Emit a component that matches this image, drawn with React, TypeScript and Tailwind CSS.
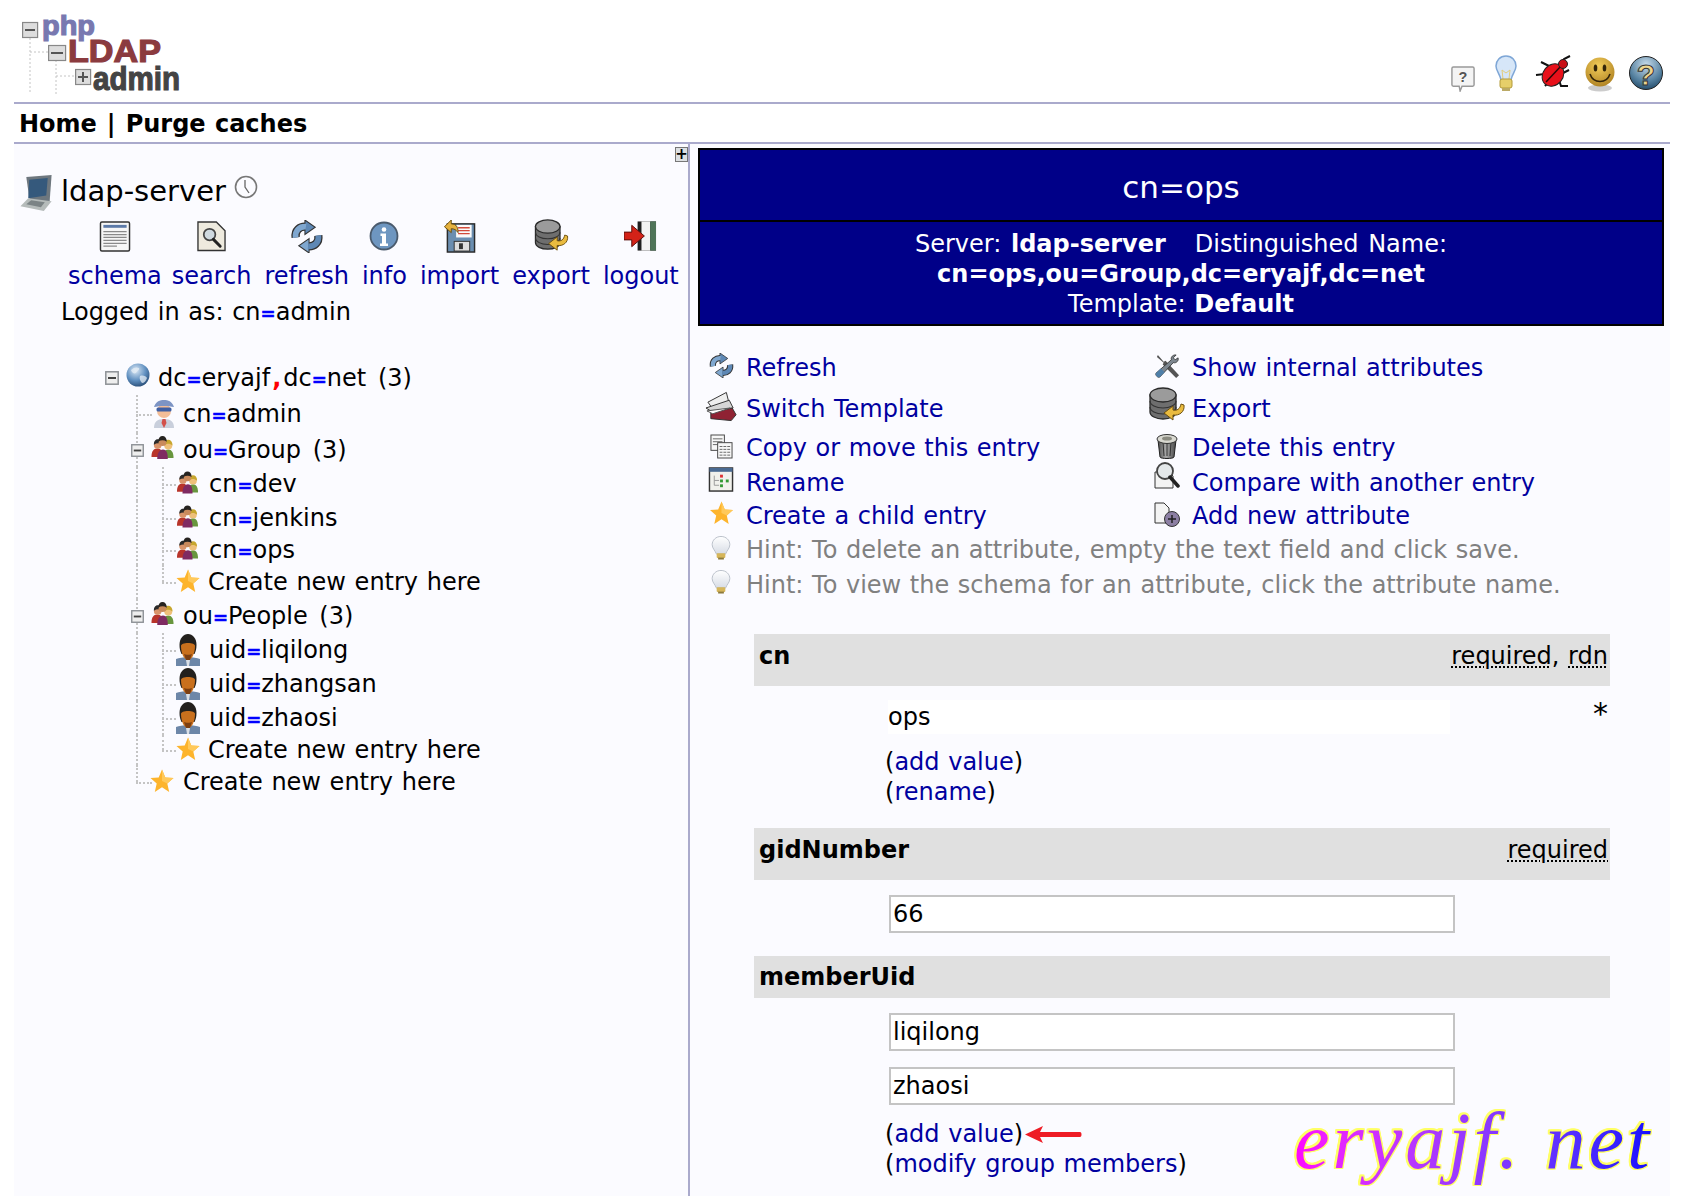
import type { ReactNode } from 'react'

const linkClass = 'text-[#0000a0]'

type IconProps = { className?: string }

function SharedDefs() {
  return (
    <svg className="absolute h-0 w-0" aria-hidden="true">
      <defs>
        <radialGradient id="globe" cx="0.4" cy="0.3" r="0.8">
          <stop offset="0" stopColor="#dbe8f5" />
          <stop offset="0.55" stopColor="#5f8fc0" />
          <stop offset="1" stopColor="#1d3f68" />
        </radialGradient>
        <radialGradient id="helpball" cx="0.5" cy="0.25" r="0.85">
          <stop offset="0" stopColor="#c7dbea" />
          <stop offset="0.6" stopColor="#54809f" />
          <stop offset="1" stopColor="#153a58" />
        </radialGradient>
        <radialGradient id="smile" cx="0.45" cy="0.3" r="0.8">
          <stop offset="0" stopColor="#f3cd5a" />
          <stop offset="1" stopColor="#a87a1c" />
        </radialGradient>
        <linearGradient id="can" x1="0" x2="1" y1="0" y2="0">
          <stop offset="0" stopColor="#4d4d4d" />
          <stop offset="0.45" stopColor="#aaaaaa" />
          <stop offset="1" stopColor="#444444" />
        </linearGradient>
        <linearGradient id="bulb" x1="0" x2="0" y1="0" y2="1">
          <stop offset="0" stopColor="#ffffff" />
          <stop offset="1" stopColor="#d8dde6" />
        </linearGradient>
      </defs>
    </svg>
  )
}

function Star({ className }: IconProps) {
  return (
    <svg viewBox="0 0 24 24" className={className}>
      <path d="M12 0.5l3.3 7.900 8.200.7-6.200 5.400 1.900 8.400L12 18.300 4.800 22.900l1.900-8.400L.5 9.100l8.200-.7z" fill="#fdb42c" />
      <path d="M12 0.500l3.300 7.900 8.200.7-6.200 5.400L12 12z" fill="#ffc95a" />
    </svg>
  )
}

function Expander({ className }: IconProps) {
  return (
    <svg viewBox="0 0 14 14" className={className}>
      <rect x="0.8" y="0.8" width="12.400" height="12.400" fill="#eeeeee" stroke="#8d9196" strokeWidth="1.500" />
      <rect x="3" y="6" width="8" height="2" fill="#444444" />
    </svg>
  )
}

function Globe({ className }: IconProps) {
  return (
    <svg viewBox="0 0 24 24" className={className}>
      <circle cx="12" cy="12" r="11.500" fill="url(#globe)" />
      <path d="M5 7c3-3 6-3 8-2 1 2-2 3-3 5-2 1-4 0-5-3zM14 13c3-1 6 0 7 2-1 3-3 5-5 5-2-2-3-5-2-7z" fill="#e6eef5" opacity="0.75" />
    </svg>
  )
}

function Admin({ className }: IconProps) {
  return (
    <svg viewBox="0 0 22 28" className={className}>
      <path d="M1 28c0-6 3-9 10-9s10 3 10 9z" fill="#c9cfdc" />
      <path d="M9.500 19h3l1 4-2.500 5-2.500-5z" fill="#d3504a" />
      <circle cx="11" cy="11" r="7" fill="#f3bd97" />
      <path d="M1 7c2-6 6-7 10-7s8 1 10 7c-6-1.500-14-1.500-20 0z" fill="#7d94c4" />
      <rect x="3.500" y="7.500" width="15" height="4" rx="1.500" fill="#3f5fa3" />
    </svg>
  )
}

function Group({ className }: IconProps) {
  return (
    <svg viewBox="0 0 23 24" className={className}>
      <path d="M0 22c0-6 2-9 6-9s6 3 6 9z" fill="#b8342a" />
      <circle cx="6.500" cy="9.500" r="4" fill="#d9946a" />
      <path d="M2.500 9c0-4 2-5.500 4-5.500s4 1.500 4 5.500c-2-2-5-2-8 0z" fill="#2b2b2b" />
      <path d="M12 23c0-6 2-9 5.500-9s5.500 3 5.500 9z" fill="#68963e" />
      <circle cx="17.500" cy="10" r="4.200" fill="#eec07a" />
      <path d="M13 10c0-4 2-6 4.500-6s4.500 2 4.500 6c-3-2.500-6-2.500-9 0z" fill="#c7a62e" />
      <path d="M6 24c0-6 2-10 6-10s5 4 5 10z" fill="#7f2b62" />
      <circle cx="11.500" cy="6.500" r="4" fill="#c98a5c" />
      <path d="M7 6c0-4 2-6 4.500-6S16 2 16 6c-3-2-6-2-9 0z" fill="#262320" />
    </svg>
  )
}

function Person({ className }: IconProps) {
  return (
    <svg viewBox="0 0 24 32" className={className}>
      <path d="M0 32v-7c3-1 7-2 12-2s9 1 12 2v7z" fill="#6d87a8" />
      <path d="M10 26h4l-1 6h-2z" fill="#d9dfe6" />
      <path d="M3.500 11C3.500 4 7.500 0 12 0s8.500 4 8.500 11c0 3-.5 6-2 9h-13C4 17 3.500 14 3.500 11z" fill="#23201d" />
      <path d="M5 12c0-2 3-3 7-3s7 1 7 3c0 7-3 14-7 14S5 19 5 12z" fill="#c9701d" />
      <path d="M8 20c1.500 1 6.500 1 8 0l-2 6h-4z" fill="#7c3f12" />
    </svg>
  )
}

function Bulb({ className }: IconProps) {
  return (
    <svg viewBox="0 0 20 25" className={className}>
      <path d="M10 .5C4.500.5.800 4.500.800 9c0 4 3.200 6 4.200 9.500h10C16 15 19.200 13 19.200 9 19.200 4.500 15.500.5 10 .5z" fill="url(#bulb)" stroke="#b9bfc9" />
      <rect x="5.500" y="18" width="9" height="5" rx="1" fill="#d6b65a" />
      <rect x="7" y="22.500" width="6" height="2" fill="#8d7a3c" />
    </svg>
  )
}

function RefreshIcon({ className }: IconProps) {
  const top = 'M5 17C4 10 9 6 15 6.500'
  const bottom = 'M27 15c1 7-4 11-10 10.500'
  return (
    <svg viewBox="0 0 32 32" className={className}>
      <path d={top} fill="none" stroke="#333333" strokeWidth="8" />
      <path d={bottom} fill="none" stroke="#333333" strokeWidth="8" />
      <path d="M14 0l10 7-10 7z" fill="#5e88b5" stroke="#333333" />
      <path d="M18 18l-10 7 10 7z" fill="#7fa7cf" stroke="#333333" />
      <path d={top} fill="none" stroke="#7fa7cf" strokeWidth="5.500" />
      <path d={bottom} fill="none" stroke="#5e88b5" strokeWidth="5.500" />
    </svg>
  )
}

function SchemaIcon({ className }: IconProps) {
  return (
    <svg viewBox="0 0 32 32" className={className}>
      <rect x="1" y="1" width="30" height="30" rx="1.500" fill="#f6f6f6" stroke="#333333" strokeWidth="1.500" />
      <rect x="4" y="4" width="24" height="3" fill="#5c7aa8" />
      <path d="M4 11h24M4 14h24M4 17h24M4 20h24M4 23h24M4 26h14" stroke="#8a8a8a" strokeWidth="1.300" />
    </svg>
  )
}

function SearchIcon({ className }: IconProps) {
  return (
    <svg viewBox="0 0 30 32" className={className}>
      <path d="M1 1h19l9 9v20.500H1z" fill="#eeeade" stroke="#333333" strokeWidth="1.400" />
      <circle cx="13" cy="14" r="6" fill="#cfd9df" stroke="#444444" strokeWidth="1.800" />
      <path d="M17 19l7 7" stroke="#222222" strokeWidth="3" strokeLinecap="round" />
    </svg>
  )
}

function InfoIcon({ className }: IconProps) {
  return (
    <svg viewBox="0 0 30 30" className={className}>
      <circle cx="15" cy="15" r="13.500" fill="#6e96c0" stroke="#4a5a6c" strokeWidth="1.800" />
      <circle cx="15" cy="8.500" r="2.300" fill="#ffffff" />
      <path d="M11.500 12.500h5.500v10h2v2.500h-8v-2.500h2v-7.500h-1.500z" fill="#ffffff" />
    </svg>
  )
}

function ImportIcon({ className }: IconProps) {
  return (
    <svg viewBox="0 0 32 34" className={className}>
      <rect x="3" y="4" width="28" height="29" fill="#6b8eb0" stroke="#2a2a2a" strokeWidth="1.500" />
      <rect x="12" y="5" width="16" height="13" fill="#fafafa" />
      <path d="M14 8h12M14 11h12M14 14h12" stroke="#d24a3a" strokeWidth="1.400" />
      <rect x="10" y="22" width="16" height="10" fill="#dddddd" stroke="#333333" />
      <rect x="15" y="24" width="4" height="6" fill="#333333" />
      <path d="M0 7l7-7v4c5 0 7 3 7 9-2-3-4-4-7-4v4z" fill="#e5b13e" stroke="#6a4e10" />
    </svg>
  )
}

function ExportIcon({ className }: IconProps) {
  return (
    <svg viewBox="0 0 36 36" className={className}>
      <path d="M1 8v17c0 4 6 7 13 7s13-3 13-7V8z" fill="#6e6e6e" stroke="#2a2a2a" strokeWidth="1.300" />
      <path d="M1 14c0 4 6 7 13 7s13-3 13-7M1 20c0 4 6 7 13 7s13-3 13-7" fill="none" stroke="#333333" strokeWidth="1.100" />
      <ellipse cx="14" cy="8" rx="13" ry="7" fill="#9b9b9b" stroke="#2a2a2a" strokeWidth="1.300" />
      <path d="M35 18c1 7-5 11-11 10v5l-9-7 9-7v4c4 1 7-1 8-6z" fill="#eabb3f" stroke="#6c5010" />
    </svg>
  )
}

function LogoutIcon({ className }: IconProps) {
  return (
    <svg viewBox="0 0 34 32" className={className}>
      <rect x="14" y="1" width="19" height="30" fill="#1f1f1f" />
      <path d="M18 1h9v30h-9z" fill="#f3f3f3" />
      <path d="M27 1h6v30h-6z" fill="#4f7458" />
      <path d="M0 12h8V5l13 11-13 11v-7H0z" fill="#d32218" stroke="#5a0f0b" />
    </svg>
  )
}

function ClockIcon({ className }: IconProps) {
  return (
    <svg viewBox="0 0 24 24" className={className}>
      <circle cx="12" cy="12" r="10.500" fill="#fbfbff" stroke="#777777" strokeWidth="1.600" />
      <path d="M11 5v7l4 6" fill="none" stroke="#666666" strokeWidth="1.300" />
    </svg>
  )
}

function ServerIcon({ className }: IconProps) {
  return (
    <svg viewBox="0 0 34 38" className={className}>
      <path d="M6 2l26-2-2 27-20 3z" fill="#6e777e" />
      <path d="M9 5l19-2-1.500 18L8 24z" fill="#35597c" />
      <path d="M0 32l8-8 24 3-8 10z" fill="#b5bbba" />
      <path d="M6 30l5-4 14 2-4 5z" fill="#7b8385" />
    </svg>
  )
}

function ToolsIcon({ className }: IconProps) {
  return (
    <svg viewBox="0 0 26 26" className={className}>
      <path d="M3 1l6 7 2-1 14 15-3 3L8 11l1-2-7-6z" fill="#555555" />
      <path d="M22 1c-3-.5-6 2-5 5L1 20c-1 2 2 5 4 4L19 9c3 1 6-2 5-5l-3 2-2-2z" fill="#7d8790" stroke="#2a2a2a" strokeWidth="0.800" />
      <path d="M1 20l5-5 4 4-5 5c-2 1-5-2-4-4z" fill="#4f7fa8" />
    </svg>
  )
}

function SwitchIcon({ className }: IconProps) {
  return (
    <svg viewBox="0 0 34 32" className={className}>
      <path d="M3 11L22 1l3 12-17 5z" fill="#eeeeee" stroke="#333333" />
      <path d="M1 17l24-8 4 8-20 5z" fill="#d6d6d6" stroke="#333333" />
      <path d="M6 22l22-5 4 7-5 6-21-2z" fill="#8f2233" stroke="#333333" />
      <path d="M2 20l24-3-18 6z" fill="#ffffff" stroke="#555555" />
    </svg>
  )
}

function CopyIcon({ className }: IconProps) {
  return (
    <svg viewBox="0 0 24 26" className={className}>
      <rect x="1" y="1" width="14" height="16" fill="#f7f7f7" stroke="#444444" />
      <path d="M3 5h10M3 8h10M3 11h10" stroke="#666666" />
      <rect x="8" y="9" width="15" height="16" fill="#f7f7f7" stroke="#444444" />
      <path d="M10 13h11M10 16h11M10 19h11M10 22h11" stroke="#666666" strokeDasharray="3 1" />
    </svg>
  )
}

function RenameIcon({ className }: IconProps) {
  return (
    <svg viewBox="0 0 26 26" className={className}>
      <rect x="1" y="1" width="24" height="24" fill="#f1f1ec" stroke="#333333" strokeWidth="1.500" />
      <rect x="1" y="1" width="24" height="4" fill="#4a6a92" />
      <path d="M6 9v10h5M6 14h5" fill="none" stroke="#999999" />
      <rect x="12" y="8" width="3" height="3" fill="#d33" />
      <rect x="12" y="13" width="3" height="3" fill="#393" />
      <rect x="18" y="13" width="3" height="3" fill="#393" />
      <rect x="12" y="18" width="3" height="3" fill="#393" />
    </svg>
  )
}

function TrashIcon({ className }: IconProps) {
  return (
    <svg viewBox="0 0 22 25" className={className}>
      <path d="M2 6l2 17c0 2 14 2 14 0l2-17z" fill="url(#can)" stroke="#222222" />
      <path d="M7 8l1 14M11 8v14M15 8l-1 14" stroke="#333333" />
      <ellipse cx="11" cy="5" rx="10" ry="4.500" fill="#d8d8d0" stroke="#333333" />
      <ellipse cx="11" cy="4.500" rx="5" ry="2" fill="#8b8b80" />
    </svg>
  )
}

function CompareIcon({ className }: IconProps) {
  return (
    <svg viewBox="0 0 26 31" className={className}>
      <path d="M1 10h14l4 4v12H1z" fill="#f3f3f3" stroke="#333333" />
      <circle cx="11" cy="9" r="8" fill="#e4e8ea" stroke="#444444" strokeWidth="1.800" />
      <path d="M16 15l8 9" stroke="#222222" strokeWidth="3.500" strokeLinecap="round" />
    </svg>
  )
}

function AddAttrIcon({ className }: IconProps) {
  return (
    <svg viewBox="0 0 26 25" className={className}>
      <path d="M1 1h9l5 5v15H1z" fill="#f3f3f3" stroke="#333333" />
      <circle cx="18" cy="17" r="7.500" fill="#8c7fa3" stroke="#333333" />
      <path d="M14 17h8M18 13v8" stroke="#222222" strokeWidth="1.500" />
    </svg>
  )
}

function BubbleHelp({ className }: IconProps) {
  return (
    <svg viewBox="0 0 24 27" className={className}>
      <path d="M2 1h20c1 0 1.500 .5 1.500 1.500v17c0 1-.5 1.500-1.500 1.500H11l-2 5-1-5H2c-1 0-1.500-.5-1.500-1.500v-17C.5 1.500 1 1 2 1z" fill="#f4f4f4" stroke="#999999" strokeWidth="1.500" />
      <text x="12" y="17" textAnchor="middle" fontSize="15" fontWeight="700" fontFamily="Liberation Sans" fill="#555555">?</text>
    </svg>
  )
}

function HeaderBulb({ className }: IconProps) {
  return (
    <svg viewBox="0 0 22 37" className={className}>
      <path d="M11 1C5 1 1 5.500 1 11c0 5 4 8 5 14h10c1-6 5-9 5-14C21 5.500 17 1 11 1z" fill="#d6e6f8" stroke="#7ea6d6" strokeWidth="1.500" />
      <path d="M8 24l-1-9 4 3 4-3-1 9" fill="none" stroke="#e2cd7d" />
      <rect x="5" y="24" width="12" height="9" rx="2" fill="#e6cf6a" stroke="#b39a3a" />
      <rect x="7" y="33" width="8" height="3" fill="#bbaa66" />
    </svg>
  )
}

function Bug({ className }: IconProps) {
  return (
    <svg viewBox="0 0 38 38" className={className}>
      <path d="M25 10l4-5 6-3M14 12L6 8M10 20L1 21M15 26l-5 6M24 26l2 6 7 0M28 19l6-3" stroke="#111111" strokeWidth="2" fill="none" />
      <ellipse cx="18" cy="21" rx="10" ry="12" transform="rotate(40 18 21)" fill="#e8101a" stroke="#222222" />
      <path d="M11 28L26 12" stroke="#2a0606" strokeWidth="1.500" />
      <circle cx="28" cy="10" r="4.500" fill="#c80f16" stroke="#222222" />
    </svg>
  )
}

function Smile({ className }: IconProps) {
  return (
    <svg viewBox="0 0 30 35" className={className}>
      <ellipse cx="15" cy="31" rx="12" ry="3.500" fill="#cccccc" />
      <circle cx="15" cy="15" r="14.500" fill="url(#smile)" />
      <ellipse cx="10.500" cy="11" rx="1.800" ry="3.500" fill="#33250a" />
      <ellipse cx="19.500" cy="11" rx="1.800" ry="3.500" fill="#33250a" />
      <path d="M5 17c2 6 6 7.500 10 7.500s8-1.500 10-7.500" fill="none" stroke="#33250a" strokeWidth="1.600" />
    </svg>
  )
}

function HelpBall({ className }: IconProps) {
  return (
    <svg viewBox="0 0 34 36" className={className}>
      <circle cx="17" cy="17" r="16.500" fill="url(#helpball)" stroke="#222222" />
      <text x="17" y="29" textAnchor="middle" fontSize="30" fontWeight="700" fontFamily="Liberation Sans" fill="#eed58d" stroke="#333333" strokeWidth="1">?</text>
    </svg>
  )
}

function Logo() {
  return (
    <svg viewBox="0 -8 170 92" className="ml-[8px] mt-[5px] h-[92px] w-[170px] shrink-0">
      <g stroke="#c4c4c4" strokeDasharray="2 2" fill="none">
        <path d="M8 25v56M34 47v34M8 39h18M34 63h19" />
      </g>
      <g fill="#dddddd" stroke="#888888" strokeWidth="1.200">
        <rect x="0.600" y="9.500" width="15" height="15" />
        <rect x="26.600" y="32.500" width="17" height="15" />
        <rect x="53.600" y="56.500" width="15" height="15" />
      </g>
      <path d="M3 17h10M29 40h12M56 64h10M61 59v10" stroke="#555555" strokeWidth="2" />
      <g fontFamily="Liberation Sans" fontWeight="700" strokeWidth="1.200">
        <text x="20" y="22" fontSize="28" fill="#7878b0" stroke="#7878b0" textLength="53" lengthAdjust="spacingAndGlyphs">php</text>
        <text x="46" y="49" fontSize="32" fill="#8b3b3f" stroke="#8b3b3f" textLength="93" lengthAdjust="spacingAndGlyphs">LDAP</text>
        <text x="71" y="77" fontSize="34" fill="#444444" stroke="#444444" textLength="87" lengthAdjust="spacingAndGlyphs">admin</text>
      </g>
    </svg>
  )
}

function Dn({ parts }: { parts: string }) {
  // = in blue, , in red, like the original tree labels
  return (
    <>
      {parts.split(/([=,])/).map((part, i) =>
        part === '=' ? (
          <b key={i} className="text-[18px] text-[#0000ff] [-webkit-text-stroke:0.6px_#0000ff]">=</b>
        ) : part === ',' ? (
          <b key={i} className="mx-[2px] text-[#ff0000]">,</b>
        ) : (
          <span key={i}>{part}</span>
        ),
      )}
    </>
  )
}

function Guide({ level, half }: { level: 1 | 2; half?: boolean }) {
  return (
    <span
      className={`absolute top-0 border-l-2 border-dotted border-[#c4c4c4] ${level === 1 ? 'left-[122px]' : 'left-[148px]'} ${half ? 'h-1/2' : 'h-full'}`}
    />
  )
}

function Elbow({ level }: { level: 1 | 2 }) {
  return (
    <span
      className={`absolute top-1/2 h-0 border-t-2 border-dotted border-[#c4c4c4] ${level === 1 ? 'left-[122px] w-[16px]' : 'left-[148px] w-[14px]'}`}
    />
  )
}

interface TreeRowProps {
  className: string
  children: ReactNode
}

function TreeRow({ className, children }: TreeRowProps) {
  return <div className={`relative flex items-center whitespace-nowrap text-[24px] ${className}`}>{children}</div>
}

function ServerAction({ icon, label, className }: { icon: ReactNode; label: string; className?: string }) {
  return (
    <div className={`flex flex-col items-center ${className ?? ''}`}>
      <div className="flex h-[36px] items-center">{icon}</div>
      <a className={`mt-[5px] text-[24px] leading-[34px] ${linkClass}`}>{label}</a>
    </div>
  )
}

function LeftPanel() {
  return (
    <aside className="relative w-[676px] shrink-0 border-r-2 border-[#aaaacc]">
      <div className="absolute right-0 top-[3px] flex h-[15px] w-[13px] items-center justify-center border border-[#777777] bg-[#dde0e2] text-[15px] font-bold leading-none">
        +
      </div>
      <div className="flex h-[68px] items-end pl-[6px]">
        <ServerIcon className="h-[37px] w-[34px]" />
        <span className="ml-[7px] text-[29px] leading-[42px]">ldap-server</span>
        <ClockIcon className="mb-[13px] ml-[8px] h-[24px] w-[24px]" />
      </div>
      <div className="mt-[6px] flex gap-[13px] pl-[54px]">
        <ServerAction className="-mr-[3px]" icon={<SchemaIcon className="h-[31px] w-[32px]" />} label="schema" />
        <ServerAction icon={<SearchIcon className="h-[31px] w-[29px]" />} label="search" />
        <ServerAction icon={<RefreshIcon className="h-[33px] w-[34px]" />} label="refresh" />
        <ServerAction icon={<InfoIcon className="h-[30px] w-[30px]" />} label="info" />
        <ServerAction icon={<ImportIcon className="h-[33px] w-[32px]" />} label="import" />
        <ServerAction icon={<ExportIcon className="h-[34px] w-[35px]" />} label="export" />
        <ServerAction icon={<LogoutIcon className="h-[32px] w-[33px]" />} label="logout" />
      </div>
      <div className="pl-[47px] text-[24px] leading-[38px]">
        Logged in as: <Dn parts="cn=admin" />
      </div>

      <div className="mt-[28px]">
        <TreeRow className="h-[34px] pl-[91px]">
          <Expander className="h-[14px] w-[14px]" />
          <Globe className="ml-[7px] mb-[6px] h-[24px] w-[24px]" />
          <span className="ml-[8px]"><Dn parts="dc=eryajf,dc=net" /><span className="ml-[3px]"> (3)</span></span>
        </TreeRow>
        <TreeRow className="h-[38px] pl-[139px]">
          <Guide level={1} />
          <Elbow level={1} />
          <Admin className="relative h-[28px] w-[22px]" />
          <span className="ml-[8px]"><Dn parts="cn=admin" /></span>
        </TreeRow>
        <TreeRow className="h-[34px] pl-[117px]">
          <Guide level={1} />
          <Expander className="relative h-[13px] w-[13px]" />
          <Group className="mb-[6px] ml-[7px] h-[23px] w-[23px]" />
          <span className="ml-[9px]"><Dn parts="ou=Group" /><span className="ml-[3px]"> (3)</span></span>
        </TreeRow>
        {['cn=dev', 'cn=jenkins', 'cn=ops'].map((dn, i) => (
          <TreeRow key={dn} className={`pl-[163px] ${i === 2 ? 'h-[30px]' : 'h-[34px]'}`}>
            <Guide level={1} />
            <Guide level={2} />
            <Elbow level={2} />
            <Group className="relative mb-[4px] h-[23px] w-[21px]" />
            <span className="ml-[11px]"><Dn parts={dn} /></span>
          </TreeRow>
        ))}
        <TreeRow className="h-[34px] pl-[162px]">
          <Guide level={1} />
          <Guide level={2} half />
          <Elbow level={2} />
          <Star className="relative mb-[2px] h-[24px] w-[24px]" />
          <span className="ml-[8px]">Create new entry here</span>
        </TreeRow>
        <TreeRow className="h-[34px] pl-[117px]">
          <Guide level={1} />
          <Expander className="relative h-[13px] w-[13px]" />
          <Group className="mb-[6px] ml-[7px] h-[23px] w-[23px]" />
          <span className="ml-[9px]"><Dn parts="ou=People" /><span className="ml-[3px]"> (3)</span></span>
        </TreeRow>
        {['uid=liqilong', 'uid=zhangsan', 'uid=zhaosi'].map((dn) => (
          <TreeRow key={dn} className="h-[34px] pl-[162px]">
            <Guide level={1} />
            <Guide level={2} />
            <Elbow level={2} />
            <Person className="relative h-[32px] w-[24px]" />
            <span className="ml-[9px]"><Dn parts={dn} /></span>
          </TreeRow>
        ))}
        <TreeRow className="h-[30px] pl-[162px]">
          <Guide level={1} />
          <Guide level={2} half />
          <Elbow level={2} />
          <Star className="relative mb-[2px] h-[24px] w-[24px]" />
          <span className="ml-[8px]">Create new entry here</span>
        </TreeRow>
        <TreeRow className="h-[34px] pl-[136px]">
          <Guide level={1} half />
          <Elbow level={1} />
          <Star className="relative mb-[2px] h-[24px] w-[24px]" />
          <span className="ml-[9px]">Create new entry here</span>
        </TreeRow>
      </div>
    </aside>
  )
}

function ActionCell({ icon, label }: { icon: ReactNode; label: string }) {
  return (
    <div className="flex w-[446px] items-center">
      <div className="mr-[2px] flex w-[46px] justify-center">{icon}</div>
      <a className={linkClass}>{label}</a>
    </div>
  )
}

function Actions() {
  return (
    <div className="mt-[25px] text-[24px] whitespace-nowrap">
      <div className="flex h-[34px]">
        <ActionCell icon={<RefreshIcon className="mb-[5px] h-[25px] w-[25px]" />} label="Refresh" />
        <ActionCell icon={<ToolsIcon className="mb-[3px] h-[25px] w-[25px]" />} label="Show internal attributes" />
      </div>
      <div className="flex h-[48px]">
        <ActionCell icon={<SwitchIcon className="mb-[4px] h-[32px] w-[33px]" />} label="Switch Template" />
        <ActionCell icon={<ExportIcon className="mb-[8px] h-[36px] w-[38px]" />} label="Export" />
      </div>
      <div className="flex h-[30px]">
        <ActionCell icon={<CopyIcon className="mb-[3px] h-[25px] w-[23px]" />} label="Copy or move this entry" />
        <ActionCell icon={<TrashIcon className="mb-[3px] h-[25px] w-[22px]" />} label="Delete this entry" />
      </div>
      <div className="flex h-[40px]">
        <ActionCell icon={<RenameIcon className="mb-[7px] h-[25px] w-[26px]" />} label="Rename" />
        <ActionCell icon={<CompareIcon className="mb-[11px] h-[31px] w-[26px]" />} label="Compare with another entry" />
      </div>
      <div className="flex h-[26px]">
        <ActionCell icon={<Star className="mb-[6px] h-[24px] w-[25px]" />} label="Create a child entry" />
        <ActionCell icon={<AddAttrIcon className="mb-[3px] h-[25px] w-[26px]" />} label="Add new attribute" />
      </div>
      <div className="flex h-[42px] items-center text-[#808080]">
        <div className="mr-[2px] flex w-[46px] justify-center"><Bulb className="mb-[5px] h-[24px] w-[20px]" /></div>
        Hint: To delete an attribute, empty the text field and click save.
      </div>
      <div className="flex h-[28px] items-center text-[#808080]">
        <div className="mr-[2px] flex w-[46px] justify-center"><Bulb className="mb-[7px] h-[24px] w-[20px]" /></div>
        Hint: To view the schema for an attribute, click the attribute name.
      </div>
    </div>
  )
}

function Band({ name, children, className }: { name: string; children?: ReactNode; className: string }) {
  return (
    <div className={`flex items-start justify-between bg-[#e0e0e0] pl-[5px] pr-[2px] text-[24px] ${className}`}>
      <b>{name}</b>
      {children && <span>{children}</span>}
    </div>
  )
}

function Flag({ children }: { children: ReactNode }) {
  return <span className="underline decoration-dotted decoration-2 underline-offset-2">{children}</span>
}

function ValueBox({ value }: { value: string }) {
  return (
    <div className="flex h-[38px] w-[566px] items-center border-2 border-[#c4c4c4] bg-white pl-[2px] text-[24px]">
      {value}
    </div>
  )
}

function Attributes() {
  return (
    <div className="relative ml-[56px] mt-[35px] w-[856px]">
      <Band name="cn" className="h-[52px] pt-[3px] leading-[38px]">
        <Flag>required</Flag>, <Flag>rdn</Flag>
      </Band>
      <div className="relative pl-[134px] text-[24px] leading-[30px]">
        <div className="mt-[14px] flex h-[34px] w-[562px] items-center bg-white">ops</div>
        <span className="absolute right-[2px] top-[-1px] text-[30px]">*</span>
        <div className="-ml-[3px] mt-[13px]">(<a className={linkClass}>add value</a>)</div>
        <div className="-ml-[3px]">(<a className={linkClass}>rename</a>)</div>
      </div>
      <Band name="gidNumber" className="mt-[21px] h-[52px] pt-[3px] leading-[38px]">
        <Flag>required</Flag>
      </Band>
      <div className="pl-[135px] pt-[15px]">
        <ValueBox value="66" />
      </div>
      <Band name="memberUid" className="mt-[23px] h-[42px] leading-[42px]" />
      <div className="pl-[135px] pt-[15px] text-[24px] leading-[30px]">
        <ValueBox value="liqilong" />
        <div className="mt-[16px]">
          <ValueBox value="zhaosi" />
        </div>
        <div className="-ml-[4px] mt-[14px] flex items-center">
          (<a className={linkClass}>add value</a>)
          <svg viewBox="0 0 57 17" className="ml-[2px] h-[17px] w-[57px]">
            <path d="M0 8.500L18 0l-3 6h40c2 0 2 5 0 5H15l3 6z" fill="#ee1c25" />
          </svg>
        </div>
        <div className="-ml-[4px]">(<a className={linkClass}>modify group members</a>)</div>
      </div>
    </div>
  )
}

function Watermark() {
  return (
    <div className="absolute left-[1294px] top-[1093px] bg-gradient-to-r from-[#ff00ff] to-[#0000ff] bg-clip-text pr-[8px] font-['Liberation_Serif',serif] text-[80px] font-normal italic leading-[96px] tracking-[3px] text-transparent [filter:drop-shadow(1.500px_0_0_#ffff66)_drop-shadow(-1.500px_0_0_#ffff66)_drop-shadow(0_1.500px_0_#ffff66)_drop-shadow(0_-1.500px_0_#ffff66)]">
      eryajf. net
    </div>
  )
}

export default function App() {
  return (
    <div className="relative h-[1196px] w-[1682px] overflow-hidden bg-white pl-[14px] pr-[12px] font-['DejaVu_Sans',sans-serif] text-black [word-spacing:1px]">
      <SharedDefs />
      <header className="flex h-[104px] items-start justify-between border-b-2 border-[#aaaacc]">
        <Logo />
        <div className="flex items-end pr-[7px] pt-[54px]">
          <BubbleHelp className="mb-[8px] h-[26px] w-[24px]" />
          <HeaderBulb className="ml-[20px] mb-[8px] h-[37px] w-[22px]" />
          <Bug className="ml-[18px] mb-[8px] h-[38px] w-[38px]" />
          <Smile className="ml-[12px] mb-[8px] h-[35px] w-[30px]" />
          <HelpBall className="ml-[14px] mb-[8px] h-[36px] w-[34px]" />
        </div>
      </header>
      <nav className="flex h-[40px] items-center border-b-2 border-[#aaaacc] pl-[5px] pt-[2px] text-[24px] font-bold">
        Home<span className="mx-[10px]">|</span>Purge caches
      </nav>
      <main className="flex h-[1052px] bg-[#fbfbff]">
        <LeftPanel />
        <section className="min-w-0 flex-1 pl-[8px]">
          <div className="mr-[6px] mt-[4px] h-[178px] border-2 border-black bg-[#000088] text-center text-white">
            <div className="flex h-[72px] items-center justify-center border-b-2 border-black pt-[4px] text-[31px]">cn=ops</div>
            <div className="pt-[7px] text-[24px] leading-[30px]">
              <div className="[word-spacing:2px]">Server: <b>ldap-server</b>&nbsp;&nbsp; Distinguished Name:</div>
              <div className="font-bold">cn=ops,ou=Group,dc=eryajf,dc=net</div>
              <div>Template: <b>Default</b></div>
            </div>
          </div>
          <Actions />
          <Attributes />
        </section>
      </main>
      <Watermark />
    </div>
  )
}
